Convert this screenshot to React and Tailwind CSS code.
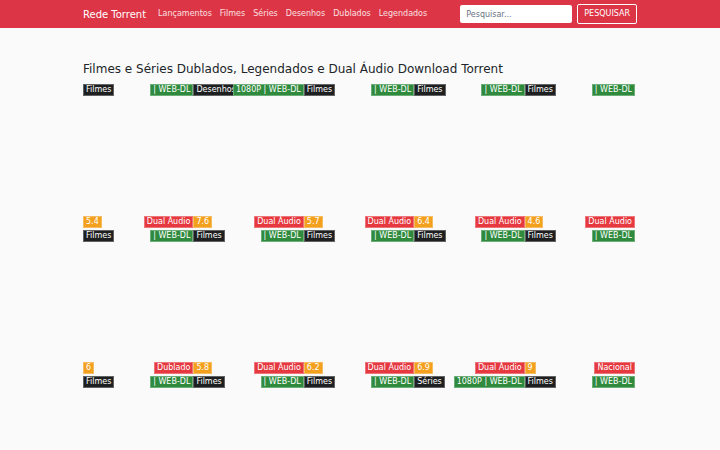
import React from 'react';

const links = ['Lançamentos', 'Filmes', 'Séries', 'Desenhos', 'Dublados', 'Legendados'];

const rows = [
  [
    { cat: 'Filmes', q: '| WEB-DL', r: '5.4', a: 'Dual Áudio' },
    { cat: 'Desenhos', q: '1080P | WEB-DL', r: '7.6', a: 'Dual Áudio' },
    { cat: 'Filmes', q: '| WEB-DL', r: '5.7', a: 'Dual Áudio' },
    { cat: 'Filmes', q: '| WEB-DL', r: '6.4', a: 'Dual Áudio' },
    { cat: 'Filmes', q: '| WEB-DL', r: '4.6', a: 'Dual Áudio' },
  ],
  [
    { cat: 'Filmes', q: '| WEB-DL', r: '6', a: 'Dublado' },
    { cat: 'Filmes', q: '| WEB-DL', r: '5.8', a: 'Dual Áudio' },
    { cat: 'Filmes', q: '| WEB-DL', r: '6.2', a: 'Dual Áudio' },
    { cat: 'Filmes', q: '| WEB-DL', r: '6.9', a: 'Dual Áudio' },
    { cat: 'Filmes', q: '| WEB-DL', r: '9', a: 'Nacional' },
  ],
  // last row: only the top badges fit in the window
  [
    { cat: 'Filmes', q: '| WEB-DL' },
    { cat: 'Filmes', q: '| WEB-DL' },
    { cat: 'Filmes', q: '| WEB-DL' },
    { cat: 'Séries', q: '1080P | WEB-DL' },
    { cat: 'Filmes', q: '| WEB-DL' },
  ],
];

const badge = 'absolute whitespace-nowrap px-[2px] text-[8px] leading-[10px] border border-white/30 text-white';

function Card({ item }) {
  return (
    <div className="relative h-[144px] overflow-hidden">
      <span className={`${badge} top-0 left-0 bg-[#1e1f21]`}>{item.cat}</span>
      <span className={`${badge} top-0 right-0 bg-[#2f8a3e]`}>{item.q}</span>
      {item.r && <span className={`${badge} bottom-0 left-0 bg-[#f2a01e]`}>{item.r}</span>}
      {item.a && <span className={`${badge} bottom-0 right-0 bg-[#e5383f]`}>{item.a}</span>}
    </div>
  );
}

export default function App() {
  return (
    <div className="h-[450px] overflow-hidden bg-[#fafafa] font-['DejaVu_Sans',sans-serif]">
      <nav className="h-[28px] bg-[#dc3545]">
        <div className="mx-auto flex h-full w-[554px] items-center">
          <span className="text-[10px] text-white">Rede Torrent</span>
          <div className="ml-[12px] flex gap-[8px]">
            {links.map(l => (
              <a key={l} className="text-[8px] text-white/85">{l}</a>
            ))}
          </div>
          <div className="ml-auto flex items-center gap-[5px]">
            <input
              placeholder="Pesquisar..."
              className="h-[18px] w-[112px] rounded-[2px] bg-white px-[6px] text-[8px] text-gray-700 outline-none placeholder:text-gray-500"
            />
            <button className="h-[20px] rounded-[2px] border border-white px-[6px] text-[8px] text-white">
              PESQUISAR
            </button>
          </div>
        </div>
      </nav>

      <main className="mx-auto w-[554px] pt-[32px]">
        <h1 className="text-[12px] text-[#212529]">
          Filmes e Séries Dublados, Legendados e Dual Áudio Download Torrent
        </h1>
        <div className="mt-[6px] grid w-[552px] grid-cols-5 gap-y-[2px]">
          {rows.flat().map((item, i) => (
            <Card key={i} item={item} />
          ))}
        </div>
      </main>
    </div>
  );
}
